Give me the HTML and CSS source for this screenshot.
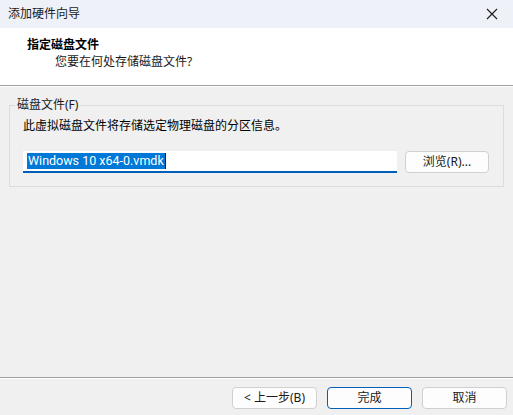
FILE: index.html
```html
<!DOCTYPE html>
<html lang="zh-CN">
<head>
<meta charset="utf-8">
<title>添加硬件向导</title>
<link rel="stylesheet" href="styles.css">
</head>
<body>
<div class="window">
  <div class="titlebar">
    <span class="title">添加硬件向导</span>
    <svg class="close" width="12" height="12" viewBox="0 0 12 12"><path d="M1 1 L11 11 M11 1 L1 11" stroke="#1a1a1a" stroke-width="1.1" fill="none"/></svg>
  </div>
  <div class="header">
    <div class="h-title">指定磁盘文件</div>
    <div class="h-sub">您要在何处存储磁盘文件?</div>
  </div>
  <div class="sep"></div>
  <div class="content">
    <fieldset class="group">
      <legend class="legend">磁盘文件(F)</legend>
      <div class="desc">此虚拟磁盘文件将存储选定物理磁盘的分区信息。</div>
      <div class="row">
        <div class="input"><span class="sel">Windows 10 x64-0.vmdk</span><span class="caret"></span></div>
        <div class="btn browse">浏览(R)...</div>
      </div>
    </fieldset>
  </div>
  <div class="sep"></div>
  <div class="footer">
    <div class="btn">&lt; 上一步(B)</div>
    <div class="btn default">完成</div>
    <div class="btn">取消</div>
  </div>
</div>
</body>
</html>
```

FILE: styles.css
```css
html, body {
  margin: 0;
  padding: 0;
}
body {
  width: 513px;
  height: 415px;
  overflow: hidden;
  background: #f0f0f0;
  font-family: "Noto Sans", "Noto Sans CJK SC", sans-serif;
  font-size: 12px;
  color: #000;
}
.window {
  display: flex;
  flex-direction: column;
  height: 415px;
}
.titlebar {
  height: 28px;
  flex: none;
  background: #eff1f8;
  display: flex;
  align-items: center;
  justify-content: space-between;
  padding: 0 15px 0 8px;
  color: #1a1a1a;
}
.title {
  line-height: 16px;
}
.close {
  display: block;
}
.header {
  height: 57px;
  flex: none;
  box-sizing: border-box;
  background: #fff;
  padding-top: 8px;
}
.h-title {
  padding-left: 27px;
  font-weight: bold;
  line-height: 17px;
}
.h-sub {
  padding-left: 55px;
  line-height: 17px;
  color: #1a1a1a;
}
.sep {
  flex: none;
  height: 1px;
  background: #a0a0a0;
  border-bottom: 1px solid #fff;
}
.content {
  flex: 1;
  padding: 10px 9px 0 9px;
}
.group {
  margin: 0;
  border: 1px solid #dcdcdc;
  padding: 0 14px 13px 13px;
  min-width: 0;
}
.legend {
  padding: 0 2px;
  margin-left: -8px;
  line-height: 16px;
  color: #1a1a1a;
}
.desc {
  margin-top: 5px;
  line-height: 16px;
}
.row {
  display: flex;
  gap: 8px;
  margin-top: 17px;
}
.input {
  width: 374px;
  height: 22px;
  box-sizing: border-box;
  background: #fff;
  border-bottom: 2px solid #005fb8;
  padding: 2px 0 0 4px;
  display: flex;
  align-items: flex-start;
}
.sel {
  background: #0078d7;
  color: #fff;
  font-family: Roboto, "Noto Sans", sans-serif;
  font-size: 12.5px;
  line-height: 16px;
  padding: 0 1px;
}
.caret {
  width: 1px;
  height: 16px;
  background: #1a1a1a;
}
.btn {
  width: 85px;
  height: 22px;
  box-sizing: border-box;
  background: #fdfdfd;
  border: 1px solid #d0d0d0;
  border-radius: 4px;
  display: flex;
  align-items: center;
  justify-content: center;
  line-height: 16px;
  color: #1a1a1a;
}
.browse {
  width: 84px;
}
.footer {
  flex: none;
  height: 36px;
  box-sizing: border-box;
  padding: 8px 6px 0 0;
  display: flex;
  justify-content: flex-end;
  gap: 10px;
}
.default {
  border-color: #005fb8;
}
```
